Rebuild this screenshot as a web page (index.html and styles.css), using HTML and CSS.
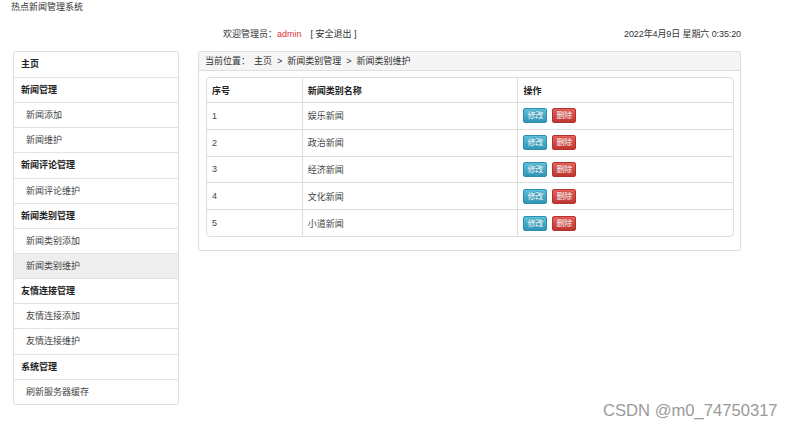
FILE: index.html
```html
<!DOCTYPE html>
<html lang="zh-CN">
<head>
<meta charset="utf-8">
<title>热点新闻管理系统</title>
<link rel="stylesheet" href="styles.css">
</head>
<body>
<div class="top-title">热点新闻管理系统</div>
<div class="header">
  <span class="welcome">欢迎管理员：<span class="admin">admin</span><span class="logout">[ 安全退出 ]</span></span>
  <span class="date">2022年4月9日 星期六 0:35:20</span>
</div>
<div class="main">
  <ul class="sidebar">
    <li class="group">主页</li>
    <li class="group">新闻管理</li>
    <li class="item">新闻添加</li>
    <li class="item">新闻维护</li>
    <li class="group">新闻评论管理</li>
    <li class="item">新闻评论维护</li>
    <li class="group">新闻类别管理</li>
    <li class="item">新闻类别添加</li>
    <li class="item active">新闻类别维护</li>
    <li class="group">友情连接管理</li>
    <li class="item">友情连接添加</li>
    <li class="item">友情连接维护</li>
    <li class="group">系统管理</li>
    <li class="item">刷新服务器缓存</li>
  </ul>
  <div class="panel">
    <div class="crumb">当前位置：<span class="crumb-path">主页<span class="sep">&gt;</span>新闻类别管理<span class="sep">&gt;</span>新闻类别维护</span></div>
    <div class="panel-body">
      <table class="grid">
        <thead>
          <tr><th class="c1">序号</th><th class="c2">新闻类别名称</th><th class="c3">操作</th></tr>
        </thead>
        <tbody>
          <tr><td>1</td><td>娱乐新闻</td><td><span class="btn edit">修改</span><span class="btn del">删除</span></td></tr>
          <tr><td>2</td><td>政治新闻</td><td><span class="btn edit">修改</span><span class="btn del">删除</span></td></tr>
          <tr><td>3</td><td>经济新闻</td><td><span class="btn edit">修改</span><span class="btn del">删除</span></td></tr>
          <tr><td>4</td><td>文化新闻</td><td><span class="btn edit">修改</span><span class="btn del">删除</span></td></tr>
          <tr><td>5</td><td>小道新闻</td><td><span class="btn edit">修改</span><span class="btn del">删除</span></td></tr>
        </tbody>
      </table>
    </div>
  </div>
</div>
<div class="watermark">CSDN @m0_74750317</div>
</body>
</html>
```
FILE: styles.css
```css
html, body {
  margin: 0;
  padding: 0;
  background: #fff;
}
body {
  font-family: "Liberation Sans", "Noto Sans CJK SC", sans-serif;
  font-size: 9px;
  color: #333;
  position: relative;
  width: 795px;
  height: 430px;
  overflow: hidden;
}
.top-title {
  height: 14px;
  line-height: 14px;
  padding-left: 11px;
  color: #333;
}
.header {
  display: flex;
  justify-content: space-between;
  padding: 14px 54px 11px 223px;
  line-height: 12px;
  color: #333;
}
.admin {
  color: #d9363e;
}
.logout {
  margin-left: 9px;
}
.date {
  letter-spacing: -0.1px;
}
.main {
  display: flex;
  align-items: flex-start;
  gap: 19px;
  padding-left: 13px;
}
.sidebar {
  list-style: none;
  margin: 0;
  padding: 0;
  width: 164px;
  border: 1px solid #ddd;
  border-radius: 3px;
  overflow: hidden;
}
.sidebar li {
  height: 24.15px;
  line-height: 24px;
  border-top: 1px solid #e3e3e3;
  padding-left: 7px;
  color: #333;
}
.sidebar li:first-child {
  border-top: none;
  height: 25px;
}
.sidebar .group {
  font-weight: bold;
  color: #222;
}
.sidebar .item {
  padding-left: 12px;
  color: #444;
}
.sidebar .active {
  background: #eeeeee;
}
.panel {
  width: 541px;
  border: 1px solid #ddd;
  border-radius: 2px;
}
.crumb {
  height: 18px;
  line-height: 18px;
  background: #f5f5f5;
  border-bottom: 1px solid #ddd;
  padding-left: 6px;
  color: #333;
}
.crumb-path {
  margin-left: 4px;
}
.sep {
  margin: 0 5px;
}
.panel-body {
  padding: 6px 7px 13px 7px;
}
.grid {
  width: 528px;
  border-collapse: separate;
  border-spacing: 0;
  border: 1px solid #ddd;
  border-radius: 4px;
  color: #444;
}
.grid th, .grid td {
  text-align: left;
  padding: 0 0 0 5px;
  border-left: 1px solid #ddd;
  border-top: 1px solid #ddd;
  vertical-align: middle;
}
.grid th {
  height: 24px;
  font-weight: bold;
  color: #222;
  border-top: none;
}
.grid td {
  height: 25.8px;
}
.grid th:first-child, .grid td:first-child {
  border-left: none;
}
.c1 { width: 90px; }
.c2 { width: 210px; }
.c3 { width: 210px; }
.btn {
  display: inline-block;
  width: 22px;
  height: 13px;
  line-height: 13px;
  text-align: center;
  color: #fff;
  font-size: 8px;
  border-radius: 2px;
  vertical-align: middle;
  text-shadow: 0 -1px 0 rgba(0,0,0,0.25);
}
.edit {
  background: linear-gradient(#5bc0de, #2f96b4);
  border: 1px solid #2f8eab;
}
.del {
  margin-left: 5px;
  background: linear-gradient(#ee5f5b, #bd362f);
  border: 1px solid #b0332d;
}
.watermark {
  position: absolute;
  left: 603px;
  top: 402px;
  font-family: "Liberation Sans", sans-serif;
  font-size: 16.6px;
  color: #9a9a9a;
  line-height: 18px;
}
```
